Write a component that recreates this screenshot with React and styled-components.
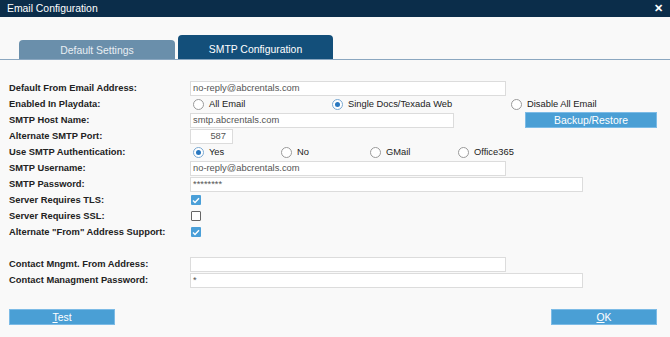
import React from "react";
import styled, { createGlobalStyle } from "styled-components";

const Global = createGlobalStyle`
  html, body { margin: 0; padding: 0; background: #f9f9f9; }
  body { font-family: "Liberation Sans", Arial, sans-serif; }
`

const Dialog = styled.div`
  width: 670px;
  height: 337px;
  background: #f9f9f9;
  display: flex;
  flex-direction: column;
  overflow: hidden;
  font-family: "Liberation Sans", Arial, sans-serif;
`
const TitleBar = styled.div`
  height: 17px;
  background: #0b2d4a;
  color: #fff;
  font-size: 10.4px;
  display: flex;
  align-items: center;
  justify-content: space-between;
  padding: 0 7px 0 7px;
`
const Close = styled.span`
  font-weight: bold;
  font-size: 11px;
  line-height: 1;
`
const TabStrip = styled.div`
  height: 42px;
  display: flex;
  align-items: flex-end;
  gap: 3px;
  padding-left: 19px;
  border-bottom: 1px solid #8ba7c0;
`
const Tab = styled.div`
  width: ${p => p.active ? 155 : 156}px;
  height: ${p => p.active ? 24 : 19}px;
  background: ${p => p.active ? "#134f7a" : "#6a8fab"};
  color: ${p => p.active ? "#fff" : "#e8eef3"};
  border-radius: 4px 4px 0 0;
  font-size: 10.4px;
  display: flex;
  align-items: center;
  justify-content: center;
  padding-top: ${p => p.active ? 4 : 2}px;
  box-sizing: border-box;
`
const Form = styled.div`
  padding: 20px 13px 0 9px;
  display: flex;
  flex-direction: column;
`
const Row = styled.div`
  height: 16px;
  display: flex;
  align-items: center;
`
const Spacer = styled.div`
  height: 16px;
`
const Label = styled.div`
  width: 181px;
  flex: none;
  font-size: 9.35px;
  font-weight: bold;
  color: #222;
  white-space: nowrap;
`
const Field = styled.div`
  flex: 1;
  display: flex;
  align-items: center;
  justify-content: space-between;
`
const Input = styled.div`
  width: ${p => p.w}px;
  height: 15px;
  box-sizing: border-box;
  background: #fff;
  border: 1px solid #dcdcdc;
  font-size: 9.35px;
  color: #555;
  padding: 0 2px;
  display: flex;
  align-items: center;
  justify-content: ${p => p.right ? "flex-end" : "flex-start"};
  padding-right: ${p => p.right ? 6 : 2}px;
`
const Radios = styled.div`
  display: flex;
  padding-left: 3px;
`
const Radio = styled.div`
  width: ${p => p.w}px;
  display: flex;
  align-items: center;
  gap: 5px;
  font-size: 9.35px;
  color: #222;
`
const Circle = styled.span`
  width: 11px;
  height: 11px;
  box-sizing: border-box;
  border-radius: 50%;
  border: 1px solid ${p => p.on ? "#7aa9d2" : "#9a9a9a"};
  background: #fff;
  display: flex;
  align-items: center;
  justify-content: center;
  &::after {
    content: "";
    width: 5px;
    height: 5px;
    border-radius: 50%;
    background: ${p => p.on ? "#2a78c0" : "transparent"};
  }
`
const Check = styled.span`
  width: 10px;
  height: 10px;
  box-sizing: border-box;
  margin-left: 1px;
  background: ${p => p.on ? "#4a9fd8" : "#fff"};
  border: ${p => p.on ? "none" : "1.5px solid #666"};
  border-radius: 1px;
  display: flex;
  align-items: center;
  justify-content: center;
`
const Button = styled.div`
  width: ${p => p.w}px;
  height: 16px;
  background: #4a9fd5;
  color: #fff;
  font-size: 10.4px;
  display: flex;
  align-items: center;
  justify-content: center;
  border: 1px solid #7cbbe6;
  box-sizing: border-box;
  u { text-decoration: underline; }
`
const Footer = styled.div`
  display: flex;
  justify-content: space-between;
  padding: 21px 13px 0 9px;
`

const Tick = () => (
  <svg width="8" height="7" viewBox="0 0 8 7">
    <path d="M1 3.5 L3 5.5 L7 1.2" stroke="#fff" strokeWidth="1.4" fill="none" />
  </svg>
)

export default function App() {
  return (
    <Dialog>
      <Global />
      <TitleBar>
        <span>Email Configuration</span>
        <Close>✕</Close>
      </TitleBar>
      <TabStrip>
        <Tab>Default Settings</Tab>
        <Tab active>SMTP Configuration</Tab>
      </TabStrip>
      <Form>
        <Row>
          <Label>Default From Email Address:</Label>
          <Field><Input w={316}>no-reply@abcrentals.com</Input></Field>
        </Row>
        <Row>
          <Label>Enabled In Playdata:</Label>
          <Radios>
            <Radio w={139}><Circle />All Email</Radio>
            <Radio w={179}><Circle on />Single Docs/Texada Web</Radio>
            <Radio w={120}><Circle />Disable All Email</Radio>
          </Radios>
        </Row>
        <Row>
          <Label>SMTP Host Name:</Label>
          <Field>
            <Input w={264}>smtp.abcrentals.com</Input>
            <Button w={132}>Backup/Restore</Button>
          </Field>
        </Row>
        <Row>
          <Label>Alternate SMTP Port:</Label>
          <Field><Input w={43} right>587</Input></Field>
        </Row>
        <Row>
          <Label>Use SMTP Authentication:</Label>
          <Radios>
            <Radio w={88}><Circle on />Yes</Radio>
            <Radio w={89}><Circle />No</Radio>
            <Radio w={88}><Circle />GMail</Radio>
            <Radio w={90}><Circle />Office365</Radio>
          </Radios>
        </Row>
        <Row>
          <Label>SMTP Username:</Label>
          <Field><Input w={316}>no-reply@abcrentals.com</Input></Field>
        </Row>
        <Row>
          <Label>SMTP Password:</Label>
          <Field><Input w={393}>********</Input></Field>
        </Row>
        <Row>
          <Label>Server Requires TLS:</Label>
          <Check on><Tick /></Check>
        </Row>
        <Row>
          <Label>Server Requires SSL:</Label>
          <Check />
        </Row>
        <Row>
          <Label>Alternate "From" Address Support:</Label>
          <Check on><Tick /></Check>
        </Row>
        <Spacer />
        <Row>
          <Label>Contact Mngmt. From Address:</Label>
          <Field><Input w={316}></Input></Field>
        </Row>
        <Row>
          <Label>Contact Managment Password:</Label>
          <Field><Input w={393}>*</Input></Field>
        </Row>
      </Form>
      <Footer>
        <Button w={106}><span><u>T</u>est</span></Button>
        <Button w={106}><span><u>O</u>K</span></Button>
      </Footer>
    </Dialog>
  )
}
